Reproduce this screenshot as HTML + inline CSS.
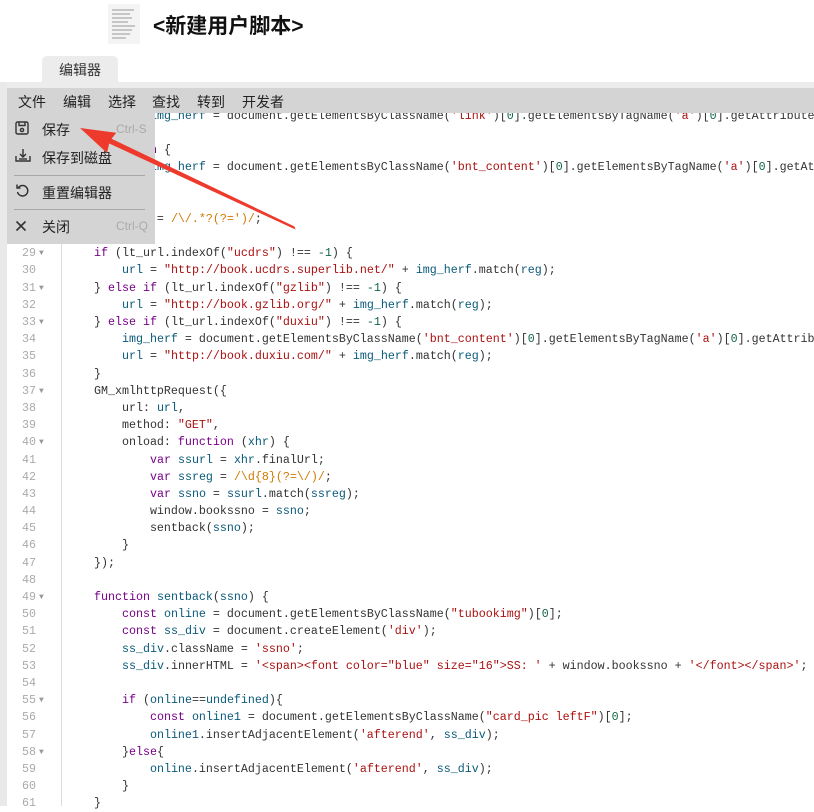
<!DOCTYPE html>
<html><head><meta charset="utf-8"><style>
*{margin:0;padding:0;box-sizing:border-box}
body{width:814px;height:806px;overflow:hidden;background:#fff;position:relative;font-family:"Liberation Sans","Noto Sans CJK SC",sans-serif}
.abs{position:absolute}
#title{left:153px;top:10px;font-size:21px;font-weight:bold;color:#111}
#tab{left:42px;top:56px;width:76px;height:27px;background:#ececec;border-radius:5px 5px 0 0;font-size:14px;color:#333;text-align:center;line-height:28px}
#band{left:0;top:82px;width:814px;height:6px;background:#ececec}
#lstrip{left:0;top:82px;width:7px;height:724px;background:#e9e9e9}
#gut{left:7px;top:88px;width:55px;height:718px;background:#fff;border-right:1px solid #ddd}
#code{left:0;top:90.6px;width:814px;font-family:"Liberation Mono",monospace;font-size:11.67px}
.l{position:relative;height:17.2px;line-height:17.2px;white-space:pre;color:#333}
.ln{position:absolute;left:7px;width:29px;text-align:right;color:#aaa}
.fd{position:absolute;left:39px;color:#999;font-size:8px}
.t{position:absolute;left:66px}
.k{color:#770088}.v{color:#0a5a7a}.s{color:#a11}.n{color:#164}.r{color:#d07a00}
#menubar{left:7px;top:88px;width:807px;height:25px;background:#d4d4d4;font-size:14px;color:#222}
#menubar span{position:absolute;top:4px}
#dd{left:7px;top:113px;width:148px;height:131px;background:#d4d4d4;font-size:14px;color:#222}
.it{position:absolute;left:35px}
.ic{position:absolute;left:8px}
.sc{position:absolute;left:109px;color:#aaa;font-size:12px}
.sep{position:absolute;left:7px;width:131px;height:1px;background:#a8a8a8}
</style></head><body>
<svg class="abs" style="left:108px;top:4px" width="32" height="40"><rect x="0" y="0" width="32" height="40" fill="#f4f4f4"/><g stroke="#999" stroke-width="1"><line x1="4" y1="6" x2="26" y2="6"/><line x1="4" y1="10" x2="22" y2="10"/><line x1="4" y1="14" x2="24" y2="14"/><line x1="4" y1="18" x2="20" y2="18"/><line x1="4" y1="22" x2="27" y2="22"/><line x1="4" y1="26" x2="24" y2="26"/><line x1="4" y1="30" x2="22" y2="30"/><line x1="4" y1="34" x2="18" y2="34"/></g></svg>
<div class="abs" id="title">&lt;新建用户脚本&gt;</div>
<div class="abs" id="tab">编辑器</div>
<div class="abs" id="band"></div>
<div class="abs" id="lstrip"></div>
<div class="abs" id="gut"></div>
<div class="abs" id="code">
<div class="l"><span class="ln">20</span><span class="t"></span></div>
<div class="l"><span class="ln">21</span><span class="t">            <span class="v">img_herf</span> = document.getElementsByClassName(<span class="s">'link'</span>)[<span class="n">0</span>].getElementsByTagName(<span class="s">'a'</span>)[<span class="n">0</span>].getAttribute</span></div>
<div class="l"><span class="ln">22</span><span class="t"></span></div>
<div class="l"><span class="ln">23</span><span class="t">     <span class="k">function</span> {</span></div>
<div class="l"><span class="ln">24</span><span class="t">            <span class="v">img_herf</span> = document.getElementsByClassName(<span class="s">'bnt_content'</span>)[<span class="n">0</span>].getElementsByTagName(<span class="s">'a'</span>)[<span class="n">0</span>].getAt</span></div>
<div class="l"><span class="ln">25</span><span class="t"></span></div>
<div class="l"><span class="ln">26</span><span class="t"></span></div>
<div class="l"><span class="ln">27</span><span class="t">         reg = <span class="r">/\/.*?(?=')/</span>;</span></div>
<div class="l"><span class="ln">28</span><span class="t"></span></div>
<div class="l"><span class="ln">29</span><span class="fd">▼</span><span class="t">    <span class="k">if</span> (lt_url.indexOf(<span class="s">"ucdrs"</span>) !== <span class="n">-1</span>) {</span></div>
<div class="l"><span class="ln">30</span><span class="t">        <span class="v">url</span> = <span class="s">"http://book.ucdrs.superlib.net/"</span> + <span class="v">img_herf</span>.match(<span class="v">reg</span>);</span></div>
<div class="l"><span class="ln">31</span><span class="fd">▼</span><span class="t">    } <span class="k">else if</span> (lt_url.indexOf(<span class="s">"gzlib"</span>) !== <span class="n">-1</span>) {</span></div>
<div class="l"><span class="ln">32</span><span class="t">        <span class="v">url</span> = <span class="s">"http://book.gzlib.org/"</span> + <span class="v">img_herf</span>.match(<span class="v">reg</span>);</span></div>
<div class="l"><span class="ln">33</span><span class="fd">▼</span><span class="t">    } <span class="k">else if</span> (lt_url.indexOf(<span class="s">"duxiu"</span>) !== <span class="n">-1</span>) {</span></div>
<div class="l"><span class="ln">34</span><span class="t">        <span class="v">img_herf</span> = document.getElementsByClassName(<span class="s">'bnt_content'</span>)[<span class="n">0</span>].getElementsByTagName(<span class="s">'a'</span>)[<span class="n">0</span>].getAttrib</span></div>
<div class="l"><span class="ln">35</span><span class="t">        <span class="v">url</span> = <span class="s">"http://book.duxiu.com/"</span> + <span class="v">img_herf</span>.match(<span class="v">reg</span>);</span></div>
<div class="l"><span class="ln">36</span><span class="t">    }</span></div>
<div class="l"><span class="ln">37</span><span class="fd">▼</span><span class="t">    GM_xmlhttpRequest({</span></div>
<div class="l"><span class="ln">38</span><span class="t">        url: <span class="v">url</span>,</span></div>
<div class="l"><span class="ln">39</span><span class="t">        method: <span class="s">"GET"</span>,</span></div>
<div class="l"><span class="ln">40</span><span class="fd">▼</span><span class="t">        onload: <span class="k">function</span> (<span class="v">xhr</span>) {</span></div>
<div class="l"><span class="ln">41</span><span class="t">            <span class="k">var</span> <span class="v">ssurl</span> = <span class="v">xhr</span>.finalUrl;</span></div>
<div class="l"><span class="ln">42</span><span class="t">            <span class="k">var</span> <span class="v">ssreg</span> = <span class="r">/\d{8}(?=\/)/</span>;</span></div>
<div class="l"><span class="ln">43</span><span class="t">            <span class="k">var</span> <span class="v">ssno</span> = <span class="v">ssurl</span>.match(<span class="v">ssreg</span>);</span></div>
<div class="l"><span class="ln">44</span><span class="t">            window.bookssno = <span class="v">ssno</span>;</span></div>
<div class="l"><span class="ln">45</span><span class="t">            sentback(<span class="v">ssno</span>);</span></div>
<div class="l"><span class="ln">46</span><span class="t">        }</span></div>
<div class="l"><span class="ln">47</span><span class="t">    });</span></div>
<div class="l"><span class="ln">48</span><span class="t"></span></div>
<div class="l"><span class="ln">49</span><span class="fd">▼</span><span class="t">    <span class="k">function</span> <span class="v">sentback</span>(<span class="v">ssno</span>) {</span></div>
<div class="l"><span class="ln">50</span><span class="t">        <span class="k">const</span> <span class="v">online</span> = document.getElementsByClassName(<span class="s">"tubookimg"</span>)[<span class="n">0</span>];</span></div>
<div class="l"><span class="ln">51</span><span class="t">        <span class="k">const</span> <span class="v">ss_div</span> = document.createElement(<span class="s">'div'</span>);</span></div>
<div class="l"><span class="ln">52</span><span class="t">        <span class="v">ss_div</span>.className = <span class="s">'ssno'</span>;</span></div>
<div class="l"><span class="ln">53</span><span class="t">        <span class="v">ss_div</span>.innerHTML = <span class="s">'&lt;span&gt;&lt;font color="blue" size="16"&gt;SS: '</span> + window.bookssno + <span class="s">'&lt;/font&gt;&lt;/span&gt;'</span>;</span></div>
<div class="l"><span class="ln">54</span><span class="t"></span></div>
<div class="l"><span class="ln">55</span><span class="fd">▼</span><span class="t">        <span class="k">if</span> (<span class="v">online</span>==<span class="v">undefined</span>){</span></div>
<div class="l"><span class="ln">56</span><span class="t">            <span class="k">const</span> <span class="v">online1</span> = document.getElementsByClassName(<span class="s">"card_pic leftF"</span>)[<span class="n">0</span>];</span></div>
<div class="l"><span class="ln">57</span><span class="t">            <span class="v">online1</span>.insertAdjacentElement(<span class="s">'afterend'</span>, <span class="v">ss_div</span>);</span></div>
<div class="l"><span class="ln">58</span><span class="fd">▼</span><span class="t">        }<span class="k">else</span>{</span></div>
<div class="l"><span class="ln">59</span><span class="t">            <span class="v">online</span>.insertAdjacentElement(<span class="s">'afterend'</span>, <span class="v">ss_div</span>);</span></div>
<div class="l"><span class="ln">60</span><span class="t">        }</span></div>
<div class="l"><span class="ln">61</span><span class="t">    }</span></div>
</div>
<div class="abs" id="menubar"><span style="left:11px">文件</span><span style="left:56px">编辑</span><span style="left:101px">选择</span><span style="left:145px">查找</span><span style="left:190px">转到</span><span style="left:235px">开发者</span></div>
<div class="abs" id="dd">
<svg class="ic" style="top:8px" width="14" height="14" viewBox="0 0 14 14" fill="none" stroke="#333" stroke-width="1.4"><rect x="1" y="1" width="12" height="12" rx="1.5"/><path d="M4 1v3.5h6V1"/><circle cx="7" cy="9" r="1.6"/></svg>
<span class="it" style="top:7px">保存</span><span class="sc" style="top:9px">Ctrl-S</span>
<svg class="ic" style="top:35px" width="16" height="14" viewBox="0 0 16 14" fill="none" stroke="#333" stroke-width="1.4"><path d="M1 8v5h14V8"/><path d="M8 1v8M5 6l3 3 3-3"/><path d="M4 11h8"/></svg>
<span class="it" style="top:35px">保存到磁盘</span>
<div class="sep" style="top:62px"></div>
<svg class="ic" style="top:70px" width="15" height="15" viewBox="0 0 15 15" fill="none" stroke="#333" stroke-width="1.5"><path d="M3.5 4.5A5.2 5.2 0 1 1 2.5 9"/><path d="M2 1.5v3.5h3.5"/></svg>
<span class="it" style="top:70px">重置编辑器</span>
<div class="sep" style="top:96px"></div>
<svg class="ic" style="top:107px" width="12" height="12" viewBox="0 0 12 12" stroke="#333" stroke-width="1.6"><path d="M1.5 1.5l9 9M10.5 1.5l-9 9"/></svg>
<span class="it" style="top:104px">关闭</span><span class="sc" style="top:106px">Ctrl-Q</span>
</div>
<svg class="abs" style="left:0;top:0" width="814" height="806"><polygon fill="#ee3a2c" points="80,128 107,153 109.2,143.5 295.5,229.5 294.5,226.5 111.6,138.8 116.3,132.8"/></svg>
</body></html>
